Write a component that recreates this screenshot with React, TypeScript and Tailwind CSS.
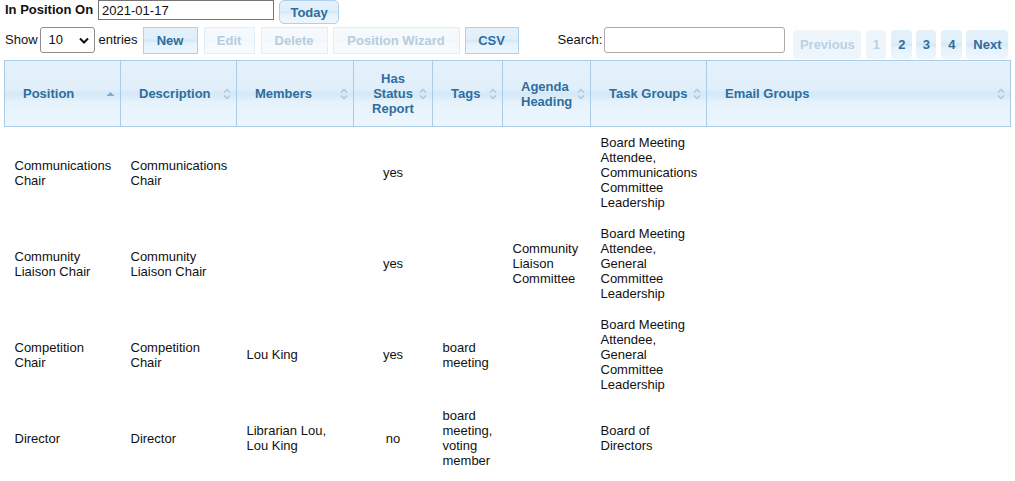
import React from "react";

const F = { fontFamily: '"Liberation Sans", Arial, sans-serif' };

const grad =
  "bg-[linear-gradient(to_bottom,#e4f1fb_0%,#e1effa_42%,#d4e8f7_50%,#e6f2fb_62%,#eef6fd_100%)]";

function SortBoth() {
  return (
    <svg width="8" height="12" viewBox="0 0 8 12" fill="none">
      <path d="M1 4.5 L4 1.5 L7 4.5" stroke="#a9c6de" strokeWidth="1.3" />
      <path d="M1 7.5 L4 10.5 L7 7.5" stroke="#a9c6de" strokeWidth="1.3" />
    </svg>
  );
}

function SortAsc() {
  return (
    <svg width="9" height="6" viewBox="0 0 9 6">
      <path d="M0.5 5 L4.5 1 L8.5 5 Z" fill="#7faad0" />
    </svg>
  );
}

const cols = [
  { label: "Position", w: 116, sort: "asc" },
  { label: "Description", w: 116 },
  { label: "Members", w: 117 },
  { label: "Has Status Report", w: 79, center: true },
  { label: "Tags", w: 70 },
  { label: "Agenda Heading", w: 88 },
  { label: "Task Groups", w: 116 },
  { label: "Email Groups", w: 304 },
];

const rows = [
  [
    "Communications Chair",
    "Communications Chair",
    "",
    "yes",
    "",
    "",
    "Board Meeting Attendee, Communications Committee Leadership",
    "",
  ],
  [
    "Community Liaison Chair",
    "Community Liaison Chair",
    "",
    "yes",
    "",
    "Community Liaison Committee",
    "Board Meeting Attendee, General Committee Leadership",
    "",
  ],
  [
    "Competition Chair",
    "Competition Chair",
    "Lou King",
    "yes",
    "board meeting",
    "",
    "Board Meeting Attendee, General Committee Leadership",
    "",
  ],
  [
    "Director",
    "Director",
    "Librarian Lou, Lou King",
    "no",
    "board meeting, voting member",
    "",
    "Board of Directors",
    "",
  ],
];

const btn = `border border-[#aed0ea] ${grad} text-[#2e6e9e] font-bold text-[13px] leading-[15px]`;
const pg = `h-[29px] rounded-[4px] ${grad} text-[#2e6e9e] font-bold flex items-center justify-center`;
const pgOff = "h-[29px] rounded-[4px] bg-[#eef6fc] text-[#b7d2e7] font-bold flex items-center justify-center";

export default function App() {
  return (
    <div className="bg-white text-[13px] text-[#111] w-[1015px] h-[481px] overflow-hidden" style={F}>
      {/* Row 1 */}
      <div className="flex items-start h-[27px] pl-[5px]">
        <span className="font-bold text-[13px] leading-[20px] mr-[5px]">In Position On</span>
        <input
          readOnly
          value="2021-01-17"
          className="w-[176px] h-[20px] border border-[#767676] px-[3px] text-[13px] leading-[18px] outline-none"
          style={F}
        />
        <button className={`${btn} ml-[5px] w-[60px] h-[24px] rounded-[5px]`} style={F}>
          Today
        </button>
      </div>

      {/* Row 2 */}
      <div className="flex items-start h-[33px] pl-[5px]">
        <span className="leading-[26px]">Show</span>
        <div className="ml-[2px] w-[55px] h-[26px] border border-[#8f8f8f] rounded-[3px] flex items-center justify-between pl-[8px] pr-[5px]">
          <span>10</span>
          <svg width="10" height="7" viewBox="0 0 10 7">
            <path d="M1 1.5 L5 5.5 L9 1.5" stroke="#111" strokeWidth="2" fill="none" />
          </svg>
        </div>
        <span className="ml-[4px] leading-[26px]">entries</span>
        <button className={`${btn} ml-[5px] h-[27px] w-[55px]`} style={F}>New</button>
        <button className={`${btn} ml-[6px] h-[27px] w-[51px] opacity-35`} style={F}>Edit</button>
        <button className={`${btn} ml-[6px] h-[27px] w-[67px] opacity-35`} style={F}>Delete</button>
        <button className={`${btn} ml-[5px] h-[27px] w-[127px] opacity-35`} style={F}>Position Wizard</button>
        <button className={`${btn} ml-[5px] h-[27px] w-[54px]`} style={F}>CSV</button>
        <span className="ml-[39px] leading-[26px]">Search:</span>
        <input
          className="ml-[2px] w-[181px] h-[26px] border border-[#aaa] rounded-[3px] outline-none"
          style={F}
        />
        <div className="ml-[8px] mt-[3px] flex">
          <span className={`${pgOff} w-[68px]`}>Previous</span>
          <span className={`${pgOff} w-[20px] ml-[5px]`}>1</span>
          <span className={`${pg} w-[21px] ml-[5px]`}>2</span>
          <span className={`${pg} w-[20px] ml-[4px]`}>3</span>
          <span className={`${pg} w-[21px] ml-[5px]`}>4</span>
          <span className={`${pg} w-[42px] ml-[4px]`}>Next</span>
        </div>
      </div>

      {/* Table */}
      <div className="pl-[4px]">
        <table className="table-fixed border-collapse w-[1006px]">
          <colgroup>
            {cols.map((c) => (
              <col key={c.label} style={{ width: c.w }} />
            ))}
          </colgroup>
          <thead>
            <tr className="h-[66px]">
              {cols.map((c) => (
                <th
                  key={c.label}
                  className={`relative border border-[#a9cde9] ${grad} text-[#2e6e9e] font-bold text-[13px] leading-[15px] py-[9px] ${
                    c.center ? "text-center px-[18px]" : "text-left pl-[18px] pr-[14px]"
                  }`}
                >
                  {c.label}
                  <span className="absolute right-[5px] top-1/2 -translate-y-1/2 flex">
                    {c.sort === "asc" ? <SortAsc /> : <SortBoth />}
                  </span>
                </th>
              ))}
            </tr>
          </thead>
          <tbody>
            {rows.map((r, i) => (
              <tr key={i}>
                {r.map((cell, j) => (
                  <td
                    key={j}
                    className={`align-middle py-[8px] px-[10px] leading-[15px] text-[13px] text-[#111] ${
                      cols[j].center ? "text-center" : "text-left"
                    }`}
                  >
                    {cell}
                  </td>
                ))}
              </tr>
            ))}
          </tbody>
        </table>
      </div>
    </div>
  );
}
